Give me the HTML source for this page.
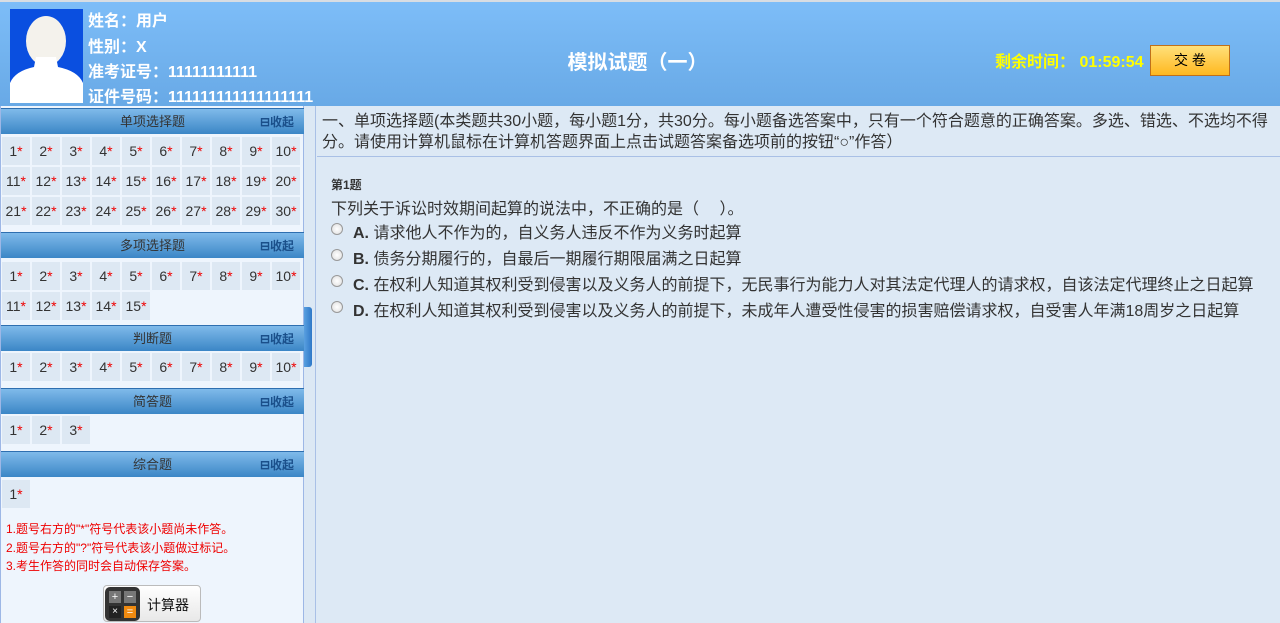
<!DOCTYPE html>
<html><head><meta charset="utf-8"><style>
*{margin:0;padding:0;box-sizing:border-box}
body{width:1280px;height:623px;overflow:hidden;font-family:"Liberation Sans","Noto Sans CJK SC",sans-serif;background:#dde9f5;position:relative}
.hdr{position:absolute;left:0;top:0;width:1280px;height:106px;background:linear-gradient(#7dbdf8,#68a9e6);border-top:2px solid #d8dde3}
.photo{position:absolute;left:10px;top:7px;width:73px;height:94px;background:#0a4fe0;overflow:hidden}
.info{position:absolute;left:88px;color:#fff;font-weight:bold;font-size:16px}
.title{position:absolute;left:0;width:1275px;top:44px;text-align:center;color:#fff;font-weight:bold;font-size:20px}
.timer{position:absolute;left:995px;top:46px;color:#ffff00;font-weight:bold;font-size:16px}
.btn{position:absolute;left:1150px;top:43px;width:80px;height:31px;border:1px solid #c0701a;background:linear-gradient(#ffe07a,#ffb820);text-align:center;line-height:29px;font-size:14px;color:#000}
.side{position:absolute;left:0;top:106px;width:304px;height:517px;background:#eef5fd;border-right:1px solid #9db7e6;border-left:1px solid #9db7e6}
.sh{position:absolute;left:0;width:303px;height:26px;background:linear-gradient(#7fbaea,#3b86c6);border-top:1px solid #2e6fb0;color:#333;font-size:13px;text-align:center;line-height:26px}
.sh span{position:absolute;right:10px;top:0;color:#1a4f8a;font-weight:bold;font-size:12px}
.cell{position:absolute;width:28px;height:28px;background:#dde8f3;font-size:14px;color:#333;text-align:center;line-height:28px}
.cell i{color:#e00;font-style:normal}
.note{position:absolute;left:5px;color:#e00;font-size:12px}
.split{position:absolute;left:304px;top:106px;width:12px;height:517px;background:#dce8f4;border-right:1px solid #a9c0e6}
.handle{position:absolute;left:304px;top:307px;width:8px;height:60px;background:linear-gradient(90deg,#5aa0e0,#2e78c8);border-radius:0 3px 3px 0}
.main{position:absolute;left:317px;top:106px;width:963px}
.instr{padding:5px 12px 0 5px;font-size:16px;line-height:21px;color:#333;height:51px;border-bottom:1px solid #a9c0e6}
.q{position:absolute;left:14px;color:#333}
.opt{position:absolute;left:14px;font-size:16px;color:#333}
.opt b{margin-left:22px}
.rad{position:absolute;left:0;top:4px;width:12px;height:12px;border-radius:50%;border:1px solid #999;background:radial-gradient(#fff,#ddd)}
</style></head><body>
<div class="hdr">
 <div class="photo"><svg width="73" height="94"><ellipse cx="36" cy="32" rx="20" ry="25" fill="#f4f2ec"/><path d="M0 74 Q5 62 24 58 L26 48 L46 48 L48 58 Q68 62 73 74 L73 94 L0 94Z" fill="#fff"/></svg></div>
 <div class="info" style="top:5px">姓名：用户</div>
 <div class="info" style="top:31px">性别：X</div>
 <div class="info" style="top:56px">准考证号：11111111111</div>
 <div class="info" style="top:81px">证件号码：111111111111111111</div>
 <div class="title">模拟试题（一）</div>
 <div class="timer">剩余时间： 01:59:54</div>
 <div class="btn">交 卷</div>
</div>
<div class="side">
<div class="sh" style="top:2px">单项选择题<span>⊟收起</span></div>
<div class="sh" style="top:126px">多项选择题<span>⊟收起</span></div>
<div class="sh" style="top:219px">判断题<span>⊟收起</span></div>
<div class="sh" style="top:282px">简答题<span>⊟收起</span></div>
<div class="sh" style="top:345px">综合题<span>⊟收起</span></div>
<div id="g"></div>
<div class="note" style="top:414px">1.题号右方的"*"符号代表该小题尚未作答。</div>
<div class="note" style="top:433px">2.题号右方的"?"符号代表该小题做过标记。</div>
<div class="note" style="top:451px">3.考生作答的同时会自动保存答案。</div>
<div style="position:absolute;left:102px;top:479px;width:98px;height:37px;border:1px solid #bbb;border-radius:4px;background:linear-gradient(#fff,#e8e8e8)">
 <div style="position:absolute;left:1px;top:1px;width:35px;height:34px;background:#333;border-radius:5px">
  <div style="position:absolute;left:4px;top:4px;width:12px;height:12px;background:#777;color:#fff;font-size:11px;line-height:12px;text-align:center">+</div>
  <div style="position:absolute;left:19px;top:4px;width:12px;height:12px;background:#777;color:#fff;font-size:11px;line-height:12px;text-align:center">−</div>
  <div style="position:absolute;left:4px;top:19px;width:12px;height:12px;background:#222;color:#fff;font-size:10px;line-height:12px;text-align:center">×</div>
  <div style="position:absolute;left:19px;top:19px;width:12px;height:12px;background:#f08a10;color:#fff;font-size:11px;line-height:12px;text-align:center">=</div>
 </div>
 <div style="position:absolute;left:43px;top:9px;font-size:14px;color:#111">计算器</div>
</div>
</div>
<div class="split"></div><div class="handle"></div>
<div class="main">
 <div class="instr">一、单项选择题(本类题共30小题，每小题1分，共30分。每小题备选答案中，只有一个符合题意的正确答案。多选、错选、不选均不得分。请使用计算机鼠标在计算机答题界面上点击试题答案备选项前的按钮“○”作答）</div>
 <div class="q" style="top:70px;font-size:12px;font-weight:bold">第1题</div>
 <div class="q" style="top:89px;font-size:16px">下列关于诉讼时效期间起算的说法中，不正确的是（　 ）。</div>
 <div class="opt" style="top:113px"><span class="rad"></span><b>A.</b> 请求他人不作为的，自义务人违反不作为义务时起算</div>
 <div class="opt" style="top:139px"><span class="rad"></span><b>B.</b> 债务分期履行的，自最后一期履行期限届满之日起算</div>
 <div class="opt" style="top:165px"><span class="rad"></span><b>C.</b> 在权利人知道其权利受到侵害以及义务人的前提下，无民事行为能力人对其法定代理人的请求权，自该法定代理终止之日起算</div>
 <div class="opt" style="top:191px"><span class="rad"></span><b>D.</b> 在权利人知道其权利受到侵害以及义务人的前提下，未成年人遭受性侵害的损害赔偿请求权，自受害人年满18周岁之日起算</div>
</div>
<script>
var g=document.getElementById('g'),h='';
function row(top,from,to){for(var i=from;i<=to;i++){var c=(i-from);h+='<div class="cell" style="left:'+(1+c*30)+'px;top:'+top+'px">'+i+'<i>*</i></div>';}}
row(31,1,10);row(61,11,20);row(91,21,30);
row(156,1,10);row(186,11,15);
row(247,1,10);
row(310,1,3);
row(374,1,1);
g.innerHTML=h;
</script>
</body></html>
